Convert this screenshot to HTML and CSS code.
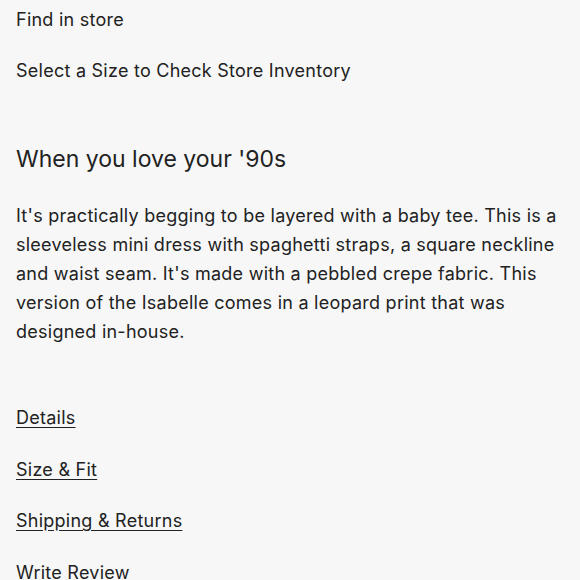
FILE: index.html
```html
<!DOCTYPE html>
<html lang="en">
<head>
	<meta charset="UTF-8">
	<title>Isabelle Dress</title>
	<link rel="stylesheet" href="styles.css">
</head>
<body>
	<section class="store">
		<p class="store-title">Find in store</p>
		<p class="store-hint">Select a Size to Check Store Inventory</p>
	</section>
	<section class="about">
		<h2>When you love your '90s</h2>
		<p>It's practically begging to be layered with a baby tee. This is a sleeveless mini dress with spaghetti straps, a square neckline and waist seam. It's made with a pebbled crepe fabric. This version of the Isabelle comes in a leopard print that was designed in-house.</p>
	</section>
	<ul class="links">
		<li><a href="#">Details</a></li>
		<li><a href="#">Size &amp; Fit</a></li>
		<li><a href="#">Shipping &amp; Returns</a></li>
		<li class="plain">Write Review</li>
	</ul>
</body>
</html>
```

FILE: styles.css
```css
body {
	background-color: #f7f7f7;
	color: #222;
	font-family: Inter, "Open Sans", sans-serif;
	font-size: 18px;
	letter-spacing: 0.25px;
	line-height: 29px;
	margin: 0;
	padding: 5px 16px 0;
}
p {
	margin: 0;
}
.store-hint {
	margin-top: 22px;
}
.about h2 {
	font-size: 23px;
	font-weight: normal;
	letter-spacing: 0;
	line-height: 32px;
	margin: 58px 0 26px;
}
.links {
	list-style: none;
	margin: 57px 0 0;
	padding: 0;
}
.links li {
	margin-bottom: 22.5px;
}
.links a {
	color: #222;
	text-decoration: underline;
	text-underline-offset: 3px;
}
```
